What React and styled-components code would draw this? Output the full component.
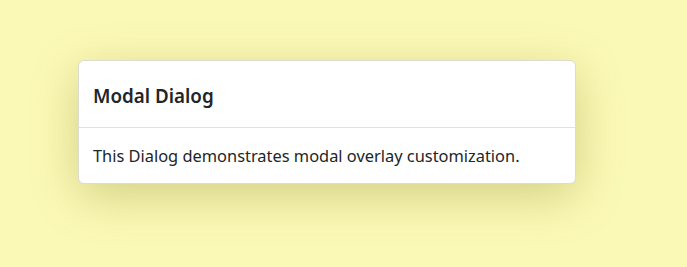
import React from 'react'
import styled, { createGlobalStyle } from 'styled-components'

const GlobalStyle = createGlobalStyle`
  html, body {
    margin: 0;
    padding: 0;
    background: #fbf9b6;
  }
  body {
    font-family: 'Noto Sans', 'Open Sans', sans-serif;
    color: #212529;
  }
`

const Page = styled.div`
  width: 687px;
  height: 267px;
  box-sizing: border-box;
  padding: 60px 0 0 78px;
`

const Dialog = styled.div`
  width: 498px;
  box-sizing: border-box;
  background: #fff;
  border: 1px solid #dcdcd0;
  border-radius: 6px;
  box-shadow: 0 12px 48px rgba(120, 115, 20, 0.3);
  overflow: hidden;
`

const Header = styled.div`
  height: 67px;
  box-sizing: border-box;
  padding: 4px 14px 0;
  display: flex;
  align-items: center;
  border-bottom: 1px solid #dee2e6;
`

const Title = styled.h5`
  margin: 0;
  font-size: 18.8px;
  font-weight: 600;
  line-height: 1.2;
`

const Body = styled.div`
  height: 55px;
  box-sizing: border-box;
  padding: 0 14px;
  display: flex;
  align-items: center;
  font-size: 16.4px;
`

export default function App() {
  return (
    <>
      <GlobalStyle />
      <Page>
        <Dialog>
          <Header>
            <Title>Modal Dialog</Title>
          </Header>
          <Body>This Dialog demonstrates modal overlay customization.</Body>
        </Dialog>
      </Page>
    </>
  )
}
